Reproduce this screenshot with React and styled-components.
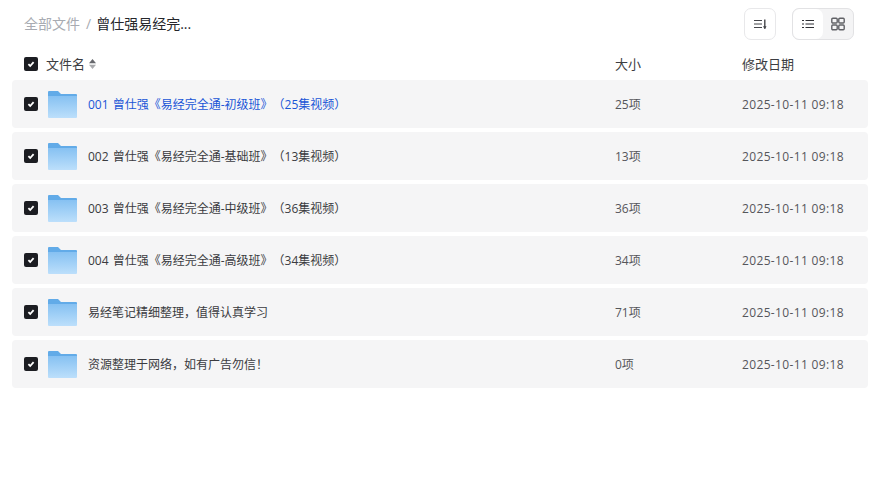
import React from 'react'
import styled, { createGlobalStyle } from 'styled-components'

const GlobalStyle = createGlobalStyle`
  html, body {
    margin: 0;
    padding: 0;
    background: #fff;
    font-family: "Open Sans", "Noto Sans CJK SC", sans-serif;
    text-spacing-trim: space-all;
  }
`

const Page = styled.div`
  width: 878px;
  height: 495px;
  padding: 8px 10px 0 12px;
  box-sizing: border-box;
  overflow: hidden;
`

const TopBar = styled.div`
  height: 32px;
  display: flex;
  align-items: center;
  justify-content: space-between;
  padding: 0 14px 0 12px;
`

const Crumbs = styled.div`
  display: flex;
  align-items: center;
  font-size: 14px;
  margin-top: -2px;
`

const CrumbLink = styled.span`
  color: #a8abb2;
`

const CrumbSep = styled.span`
  color: #a8abb2;
  margin: 0 5px 0 6px;
`

const CrumbCurrent = styled.span`
  color: #25262b;
`

const Tools = styled.div`
  display: flex;
  gap: 16px;
`

const SortButton = styled.div`
  width: 30px;
  height: 30px;
  border: 1px solid #e8e8ea;
  border-radius: 7px;
  display: flex;
  align-items: center;
  justify-content: center;
`

const ViewSwitch = styled.div`
  width: 60px;
  height: 30px;
  border: 1px solid #e2e2e4;
  border-radius: 7px;
  background: #f4f4f5;
  display: flex;
  overflow: hidden;
`

const ViewOption = styled.div`
  flex: 1;
  display: flex;
  align-items: center;
  justify-content: center;
  border-radius: 7px;
  background: ${p => (p.$active ? '#fff' : 'transparent')};
`

const HeadRow = styled.div`
  height: 40px;
  padding-top: 8px;
  box-sizing: border-box;
  display: grid;
  grid-template-columns: 591px 127px 1fr;
  align-items: center;
  padding-left: 12px;
  font-size: 13px;
  color: #3c3d42;
`

const NameHead = styled.div`
  display: flex;
  align-items: center;
`

const HeadLabel = styled.span`
  margin: 0 0 2px 8px;
`

const HeadCell = styled.span`
  margin-bottom: 2px;
`

const Rows = styled.div`
  display: flex;
  flex-direction: column;
  gap: 4px;
`

const Row = styled.div`
  height: 48px;
  background: #f5f5f6;
  border-radius: 4px;
  display: grid;
  grid-template-columns: 591px 127px 1fr;
  align-items: center;
  padding-left: 12px;
  font-size: 12px;
  color: #55565b;
`

const NameCell = styled.div`
  display: flex;
  align-items: center;
`

const FileName = styled.span`
  margin-left: 11px;
  word-spacing: 1px;
  color: ${p => (p.$hover ? '#1a56d6' : '#3a3b40')};
`

const DateCell = styled.span`
  letter-spacing: 0.35px;
`

const Check = styled.div`
  width: 14px;
  height: 14px;
  border-radius: 2px;
  background: #1c1d22;
  display: flex;
  align-items: center;
  justify-content: center;
  flex-shrink: 0;
`

const FolderWrap = styled.div`
  width: 30px;
  height: 28px;
  margin-left: 9px;
`

const CheckMark = () => (
  <Check>
    <svg width="10" height="10" viewBox="0 0 10 10" fill="none">
      <path d="M2.4 5.2 4.2 7 7.6 3.2" stroke="#fff" strokeWidth="1.8" />
    </svg>
  </Check>
)

const Folder = ({ id }) => (
  <FolderWrap>
    <svg width="30" height="28" viewBox="0 0 30 28">
      <defs>
        <linearGradient id={id} x1="0" y1="0" x2="0" y2="1">
          <stop offset="0" stopColor="#86c1f2" />
          <stop offset="1" stopColor="#bcdffb" />
        </linearGradient>
      </defs>
      <path d="M1 2Q1 1 2 1H11L14 4H29Q30 4 30 5V12H1Z" fill="#62abe8" />
      <path d="M1 6H30V27Q30 28 29 28H2Q1 28 1 27Z" fill={`url(#${id})`} />
    </svg>
  </FolderWrap>
)

const files = [
  { name: '001 曾仕强《易经完全通-初级班》（25集视频）', size: '25项', hover: true },
  { name: '002 曾仕强《易经完全通-基础班》（13集视频）', size: '13项' },
  { name: '003 曾仕强《易经完全通-中级班》（36集视频）', size: '36项' },
  { name: '004 曾仕强《易经完全通-高级班》（34集视频）', size: '34项' },
  { name: '易经笔记精细整理，值得认真学习', size: '71项' },
  { name: '资源整理于网络，如有广告勿信！', size: '0项' },
]

export default function App() {
  return (
    <Page>
      <GlobalStyle />
      <TopBar>
        <Crumbs>
          <CrumbLink>全部文件</CrumbLink>
          <CrumbSep>/</CrumbSep>
          <CrumbCurrent>曾仕强易经完...</CrumbCurrent>
        </Crumbs>
        <Tools>
          <SortButton>
            <svg width="16" height="16" viewBox="0 0 16 16" fill="none" stroke="#45464b" strokeWidth="1.2">
              <path d="M2 4.5H10M2 8H10M2 11.5H10" />
              <path d="M12.8 3.5V12.5" strokeWidth="1.4" />
              <path d="M11.5 10.5 12.8 12.8 14.1 10.5Z" fill="#45464b" strokeWidth="0.6" />
            </svg>
          </SortButton>
          <ViewSwitch>
            <ViewOption $active>
              <svg width="14" height="14" viewBox="0 0 14 14" fill="none" stroke="#2e2f34" strokeWidth="1.2">
                <path d="M1 3.5H3M1 7H3M1 10.5H3M4.5 3.5H13M4.5 7H13M4.5 10.5H13" />
              </svg>
            </ViewOption>
            <ViewOption>
              <svg width="14" height="14" viewBox="0 0 14 14" fill="none" stroke="#606166" strokeWidth="1.4">
                <rect x="0.8" y="1.2" width="5.4" height="4.8" rx="1" />
                <rect x="7.8" y="1.2" width="5.4" height="4.8" rx="1" />
                <rect x="0.8" y="8" width="5.4" height="4.8" rx="1" />
                <rect x="7.8" y="8" width="5.4" height="4.8" rx="1" />
              </svg>
            </ViewOption>
          </ViewSwitch>
        </Tools>
      </TopBar>
      <HeadRow>
        <NameHead>
          <CheckMark />
          <HeadLabel>文件名</HeadLabel>
          <svg width="9" height="12" viewBox="0 0 9 12" style={{ marginLeft: 3 }}>
            <path d="M4.5 1 8 5.2H1Z" fill="#66676c" />
            <path d="M4.5 11 1 6.8H8Z" fill="#a9aaad" />
          </svg>
        </NameHead>
        <HeadCell>大小</HeadCell>
        <HeadCell>修改日期</HeadCell>
      </HeadRow>
      <Rows>
        {files.map((f, i) => (
          <Row key={f.name}>
            <NameCell>
              <CheckMark />
              <Folder id={`folder-${i}`} />
              <FileName $hover={f.hover}>{f.name}</FileName>
            </NameCell>
            <span>{f.size}</span>
            <DateCell>2025-10-11 09:18</DateCell>
          </Row>
        ))}
      </Rows>
    </Page>
  )
}
